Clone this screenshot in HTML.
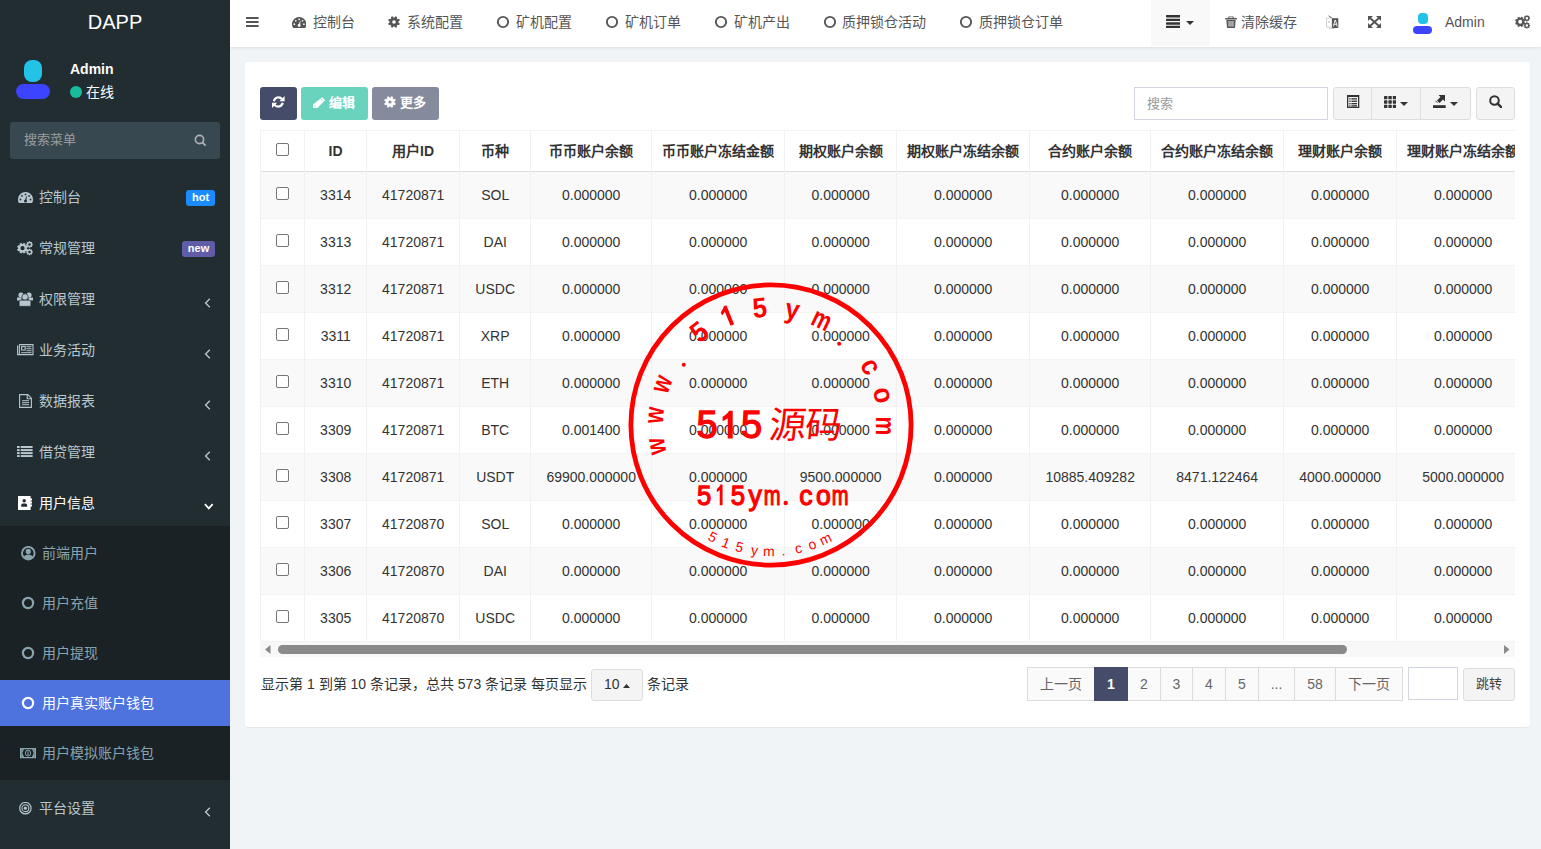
<!DOCTYPE html>
<html lang="zh-CN"><head><meta charset="utf-8">
<style>
*{box-sizing:border-box;margin:0;padding:0}
html,body{width:1541px;height:849px;overflow:hidden}
body{font-family:"Liberation Sans",sans-serif;font-size:14px;color:#333;background:#f1f4f6;position:relative}
.abs{position:absolute}
#sb{position:absolute;left:0;top:0;width:230px;height:849px;background:#222d32;color:#b8c7ce}
#logo{position:absolute;left:0;top:0;width:230px;height:45px;text-align:center;line-height:45px;font-size:20px;color:#fff}
.mi{position:absolute;left:0;width:230px;height:20px;line-height:20px;font-size:14px;color:#b8c7ce}
.mi .ic{position:absolute;left:18px;top:3px;width:15px;height:14px}
.mi .tx{position:absolute;left:39px;top:0}
.chev{position:absolute;left:204px;top:5px;width:7px;height:10px}
.badge{position:absolute;height:16px;line-height:14px;font-size:11px;font-weight:bold;color:#fff;text-align:center;border-radius:3px}
#nav{position:absolute;left:230px;top:0;width:1311px;height:47px;background:#fff;box-shadow:0 1px 3px rgba(0,0,0,.09)}
.ni{position:absolute;top:12px;height:20px;line-height:20px;font-size:14px;color:#555}
#panel{position:absolute;left:245px;top:62px;width:1285px;height:665px;background:#fff;border-radius:3px;box-shadow:0 1px 1px rgba(0,0,0,.05)}
.btn{position:absolute;border-radius:3px;color:#fff;font-size:13px;text-align:center}
table{border-collapse:collapse;table-layout:fixed;position:absolute;left:15px;top:68px}
td,th{border:1px solid #f0f0f0;text-align:center;white-space:nowrap;overflow:hidden;font-size:14px}
th{height:41px;font-weight:bold;border-bottom:2px solid #ddd;border-top:1px solid #f0f0f0}
td{height:47px}
tr.s td{background:#f9f9f9}
.cb{display:inline-block;width:13px;height:13px;border:1px solid #767676;border-radius:2px;background:#fff;vertical-align:middle}
.th{position:absolute;height:20px;line-height:20px;text-align:center;font-weight:bold;white-space:nowrap}
.td{position:absolute;height:20px;line-height:20px;text-align:center;white-space:nowrap}
.cb{position:absolute;width:13px;height:13px;border:1px solid #767676;border-radius:2px;background:#fff}
.pg{position:absolute;top:605px;height:34px;line-height:32px;border:1px solid #ddd;background:#fafafa;color:#666;text-align:center;font-size:14px}
</style></head><body>

<div id="sb">
  <div id="logo">DAPP</div>
  <!-- user panel -->
  <div class="abs" style="left:24px;top:60px;width:18px;height:22px;border-radius:8px;background:#22c3e6"></div>
  <div class="abs" style="left:16px;top:84px;width:34px;height:15px;border-radius:8px;background:#3d44ff"></div>
  <div class="abs" style="left:70px;top:60px;font-weight:bold;color:#fff;font-size:14px;line-height:18px">Admin</div>
  <div class="abs" style="left:70px;top:86px;width:12px;height:12px;border-radius:50%;background:#18bc9c"></div>
  <div class="abs" style="left:86px;top:82px;color:#fff;font-size:14px;line-height:20px">在线</div>
  <!-- search -->
  <div class="abs" style="left:10px;top:122px;width:210px;height:37px;border-radius:3px;background:#374850"></div>
  <div class="abs" style="left:24px;top:131px;font-size:13px;line-height:18px;color:#9a9c9d">搜索菜单</div>
  <svg class="abs" style="left:194px;top:133.5px" width="13" height="13" viewBox="0 0 13 13"><circle cx="5.5" cy="5.5" r="4.1" fill="none" stroke="#b0b4b6" stroke-width="1.6"/><line x1="8.4" y1="8.4" x2="11.6" y2="11.6" stroke="#b0b4b6" stroke-width="1.8"/></svg>

  <div class="mi" style="top:187px"><span class="tx">控制台</span></div>
  <div class="badge" style="left:186px;top:190px;width:29px;background:#1a8cff">hot</div>
  <div class="mi" style="top:238px"><span class="tx">常规管理</span></div>
  <div class="badge" style="left:182px;top:241px;width:33px;background:#605ca8">new</div>
  <div class="mi" style="top:289px"><span class="tx">权限管理</span></div>
  <div class="mi" style="top:340px"><span class="tx">业务活动</span></div>
  <div class="mi" style="top:391px"><span class="tx">数据报表</span></div>
  <div class="mi" style="top:442px"><span class="tx">借贷管理</span></div>
  <div class="mi" style="top:493px;color:#fff"><span class="tx">用户信息</span></div>

  <div class="abs" style="left:0;top:526px;width:230px;height:254px;background:#1a2226"></div>
  <div class="abs" style="left:0;top:680px;width:230px;height:46px;background:#4e73df"></div>
  <div class="mi" style="top:543px;color:#8aa4af"><span class="tx" style="left:42px">前端用户</span></div>
  <div class="mi" style="top:593px;color:#8aa4af"><span class="tx" style="left:42px">用户充值</span></div>
  <div class="mi" style="top:643px;color:#8aa4af"><span class="tx" style="left:42px">用户提现</span></div>
  <div class="mi" style="top:693px;color:#fff"><span class="tx" style="left:42px">用户真实账户钱包</span></div>
  <div class="mi" style="top:743px;color:#8aa4af"><span class="tx" style="left:42px">用户模拟账户钱包</span></div>
  <div class="mi" style="top:798px"><span class="tx">平台设置</span></div>
</div>

<div id="nav">
  <div class="ni" style="left:83px">控制台</div>
  <div class="ni" style="left:177px">系统配置</div>
  <div class="ni" style="left:286px">矿机配置</div>
  <div class="ni" style="left:395px">矿机订单</div>
  <div class="ni" style="left:504px">矿机产出</div>
  <div class="ni" style="left:612px">质押锁仓活动</div>
  <div class="ni" style="left:749px">质押锁仓订单</div>
  <div class="abs" style="left:921px;top:0;width:59px;height:46px;background:#f9f9f9"></div>
  <div class="ni" style="left:1011px">清除缓存</div>
  <div class="ni" style="left:1215px">Admin</div>
</div>

<div id="panel">
  <div class="btn" style="left:15px;top:25px;width:37px;height:33px;background:#444c69"></div>
  <div class="btn" style="left:56px;top:25px;width:67px;height:33px;background:#69d3be"></div><div class="abs" style="left:84px;top:31px;font-size:13px;line-height:20px;font-weight:bold;color:#fff">编辑</div>
  <div class="btn" style="left:127px;top:25px;width:67px;height:33px;background:#858b9d"></div><div class="abs" style="left:155px;top:31px;font-size:13px;line-height:20px;font-weight:bold;color:#fff">更多</div>

  <div class="abs" style="left:889px;top:25px;width:194px;height:33px;border:1px solid #d2d6de;"></div>
  <div class="abs" style="left:902px;top:33px;color:#999;font-size:13px;line-height:18px">搜索</div>
  <div class="abs" style="left:1088px;top:25px;width:138px;height:33px;border:1px solid #ddd;border-radius:3px;background:#f4f4f4"></div>
  <div class="abs" style="left:1231px;top:25px;width:39px;height:33px;border:1px solid #ddd;border-radius:3px;background:#f4f4f4"></div>
  <div class="abs" style="left:1126px;top:25px;width:1px;height:33px;background:#ddd"></div><div class="abs" style="left:1175px;top:25px;width:1px;height:33px;background:#ddd"></div>

  <!--TABLE-->
<div class="abs" style="left:15px;top:68px;width:1255px;height:527px;overflow:hidden">
<div class="abs" style="left:0;top:41px;width:1300px;height:47px;background:#f9f9f9"></div>
<div class="abs" style="left:0;top:135px;width:1300px;height:47px;background:#f9f9f9"></div>
<div class="abs" style="left:0;top:229px;width:1300px;height:47px;background:#f9f9f9"></div>
<div class="abs" style="left:0;top:323px;width:1300px;height:47px;background:#f9f9f9"></div>
<div class="abs" style="left:0;top:417px;width:1300px;height:47px;background:#f9f9f9"></div>
<div class="abs" style="left:0;top:0;width:1300px;height:1px;background:#f3f3f3"></div>
<div class="abs" style="left:0;top:41px;width:1300px;height:1px;background:#ddd"></div>
<div class="abs" style="left:0;top:88px;width:1300px;height:1px;background:#f3f3f3"></div>
<div class="abs" style="left:0;top:135px;width:1300px;height:1px;background:#f3f3f3"></div>
<div class="abs" style="left:0;top:182px;width:1300px;height:1px;background:#f3f3f3"></div>
<div class="abs" style="left:0;top:229px;width:1300px;height:1px;background:#f3f3f3"></div>
<div class="abs" style="left:0;top:276px;width:1300px;height:1px;background:#f3f3f3"></div>
<div class="abs" style="left:0;top:323px;width:1300px;height:1px;background:#f3f3f3"></div>
<div class="abs" style="left:0;top:370px;width:1300px;height:1px;background:#f3f3f3"></div>
<div class="abs" style="left:0;top:417px;width:1300px;height:1px;background:#f3f3f3"></div>
<div class="abs" style="left:0;top:464px;width:1300px;height:1px;background:#f3f3f3"></div>
<div class="abs" style="left:0;top:511px;width:1300px;height:1px;background:#f3f3f3"></div>
<div class="abs" style="left:0px;top:0;width:1px;height:511px;background:#f1f1f1"></div>
<div class="abs" style="left:44px;top:0;width:1px;height:511px;background:#f1f1f1"></div>
<div class="abs" style="left:106px;top:0;width:1px;height:511px;background:#f1f1f1"></div>
<div class="abs" style="left:199px;top:0;width:1px;height:511px;background:#f1f1f1"></div>
<div class="abs" style="left:270px;top:0;width:1px;height:511px;background:#f1f1f1"></div>
<div class="abs" style="left:391px;top:0;width:1px;height:511px;background:#f1f1f1"></div>
<div class="abs" style="left:524px;top:0;width:1px;height:511px;background:#f1f1f1"></div>
<div class="abs" style="left:636px;top:0;width:1px;height:511px;background:#f1f1f1"></div>
<div class="abs" style="left:769px;top:0;width:1px;height:511px;background:#f1f1f1"></div>
<div class="abs" style="left:890px;top:0;width:1px;height:511px;background:#f1f1f1"></div>
<div class="abs" style="left:1023px;top:0;width:1px;height:511px;background:#f1f1f1"></div>
<div class="abs" style="left:1136px;top:0;width:1px;height:511px;background:#f1f1f1"></div>
<div class="abs" style="left:1269px;top:0;width:1px;height:511px;background:#f1f1f1"></div>
<div class="cb" style="left:16px;top:13px"></div>
<div class="th" style="left:44.5px;width:62px;top:11px">ID</div>
<div class="th" style="left:106.5px;width:93px;top:11px">用户ID</div>
<div class="th" style="left:199.5px;width:71px;top:11px">币种</div>
<div class="th" style="left:270.5px;width:121px;top:11px">币币账户余额</div>
<div class="th" style="left:391.5px;width:133px;top:11px">币币账户冻结金额</div>
<div class="th" style="left:524.5px;width:112px;top:11px">期权账户余额</div>
<div class="th" style="left:636.5px;width:133px;top:11px">期权账户冻结余额</div>
<div class="th" style="left:769.5px;width:121px;top:11px">合约账户余额</div>
<div class="th" style="left:890.5px;width:133px;top:11px">合约账户冻结余额</div>
<div class="th" style="left:1023.5px;width:113px;top:11px">理财账户余额</div>
<div class="th" style="left:1136.5px;width:133px;top:11px">理财账户冻结余额</div>
<div class="cb" style="left:16px;top:57px"></div>
<div class="td" style="left:44.7px;width:62px;top:55px">3314</div>
<div class="td" style="left:106.7px;width:93px;top:55px">41720871</div>
<div class="td" style="left:199.7px;width:71px;top:55px">SOL</div>
<div class="td" style="left:270.7px;width:121px;top:55px">0.000000</div>
<div class="td" style="left:391.7px;width:133px;top:55px">0.000000</div>
<div class="td" style="left:524.7px;width:112px;top:55px">0.000000</div>
<div class="td" style="left:636.7px;width:133px;top:55px">0.000000</div>
<div class="td" style="left:769.7px;width:121px;top:55px">0.000000</div>
<div class="td" style="left:890.7px;width:133px;top:55px">0.000000</div>
<div class="td" style="left:1023.7px;width:113px;top:55px">0.000000</div>
<div class="td" style="left:1136.7px;width:133px;top:55px">0.000000</div>
<div class="cb" style="left:16px;top:104px"></div>
<div class="td" style="left:44.7px;width:62px;top:102px">3313</div>
<div class="td" style="left:106.7px;width:93px;top:102px">41720871</div>
<div class="td" style="left:199.7px;width:71px;top:102px">DAI</div>
<div class="td" style="left:270.7px;width:121px;top:102px">0.000000</div>
<div class="td" style="left:391.7px;width:133px;top:102px">0.000000</div>
<div class="td" style="left:524.7px;width:112px;top:102px">0.000000</div>
<div class="td" style="left:636.7px;width:133px;top:102px">0.000000</div>
<div class="td" style="left:769.7px;width:121px;top:102px">0.000000</div>
<div class="td" style="left:890.7px;width:133px;top:102px">0.000000</div>
<div class="td" style="left:1023.7px;width:113px;top:102px">0.000000</div>
<div class="td" style="left:1136.7px;width:133px;top:102px">0.000000</div>
<div class="cb" style="left:16px;top:151px"></div>
<div class="td" style="left:44.7px;width:62px;top:149px">3312</div>
<div class="td" style="left:106.7px;width:93px;top:149px">41720871</div>
<div class="td" style="left:199.7px;width:71px;top:149px">USDC</div>
<div class="td" style="left:270.7px;width:121px;top:149px">0.000000</div>
<div class="td" style="left:391.7px;width:133px;top:149px">0.000000</div>
<div class="td" style="left:524.7px;width:112px;top:149px">0.000000</div>
<div class="td" style="left:636.7px;width:133px;top:149px">0.000000</div>
<div class="td" style="left:769.7px;width:121px;top:149px">0.000000</div>
<div class="td" style="left:890.7px;width:133px;top:149px">0.000000</div>
<div class="td" style="left:1023.7px;width:113px;top:149px">0.000000</div>
<div class="td" style="left:1136.7px;width:133px;top:149px">0.000000</div>
<div class="cb" style="left:16px;top:198px"></div>
<div class="td" style="left:44.7px;width:62px;top:196px">3311</div>
<div class="td" style="left:106.7px;width:93px;top:196px">41720871</div>
<div class="td" style="left:199.7px;width:71px;top:196px">XRP</div>
<div class="td" style="left:270.7px;width:121px;top:196px">0.000000</div>
<div class="td" style="left:391.7px;width:133px;top:196px">0.000000</div>
<div class="td" style="left:524.7px;width:112px;top:196px">0.000000</div>
<div class="td" style="left:636.7px;width:133px;top:196px">0.000000</div>
<div class="td" style="left:769.7px;width:121px;top:196px">0.000000</div>
<div class="td" style="left:890.7px;width:133px;top:196px">0.000000</div>
<div class="td" style="left:1023.7px;width:113px;top:196px">0.000000</div>
<div class="td" style="left:1136.7px;width:133px;top:196px">0.000000</div>
<div class="cb" style="left:16px;top:245px"></div>
<div class="td" style="left:44.7px;width:62px;top:243px">3310</div>
<div class="td" style="left:106.7px;width:93px;top:243px">41720871</div>
<div class="td" style="left:199.7px;width:71px;top:243px">ETH</div>
<div class="td" style="left:270.7px;width:121px;top:243px">0.000000</div>
<div class="td" style="left:391.7px;width:133px;top:243px">0.000000</div>
<div class="td" style="left:524.7px;width:112px;top:243px">0.000000</div>
<div class="td" style="left:636.7px;width:133px;top:243px">0.000000</div>
<div class="td" style="left:769.7px;width:121px;top:243px">0.000000</div>
<div class="td" style="left:890.7px;width:133px;top:243px">0.000000</div>
<div class="td" style="left:1023.7px;width:113px;top:243px">0.000000</div>
<div class="td" style="left:1136.7px;width:133px;top:243px">0.000000</div>
<div class="cb" style="left:16px;top:292px"></div>
<div class="td" style="left:44.7px;width:62px;top:290px">3309</div>
<div class="td" style="left:106.7px;width:93px;top:290px">41720871</div>
<div class="td" style="left:199.7px;width:71px;top:290px">BTC</div>
<div class="td" style="left:270.7px;width:121px;top:290px">0.001400</div>
<div class="td" style="left:391.7px;width:133px;top:290px">0.000000</div>
<div class="td" style="left:524.7px;width:112px;top:290px">0.000000</div>
<div class="td" style="left:636.7px;width:133px;top:290px">0.000000</div>
<div class="td" style="left:769.7px;width:121px;top:290px">0.000000</div>
<div class="td" style="left:890.7px;width:133px;top:290px">0.000000</div>
<div class="td" style="left:1023.7px;width:113px;top:290px">0.000000</div>
<div class="td" style="left:1136.7px;width:133px;top:290px">0.000000</div>
<div class="cb" style="left:16px;top:339px"></div>
<div class="td" style="left:44.7px;width:62px;top:337px">3308</div>
<div class="td" style="left:106.7px;width:93px;top:337px">41720871</div>
<div class="td" style="left:199.7px;width:71px;top:337px">USDT</div>
<div class="td" style="left:270.7px;width:121px;top:337px">69900.000000</div>
<div class="td" style="left:391.7px;width:133px;top:337px">0.000000</div>
<div class="td" style="left:524.7px;width:112px;top:337px">9500.000000</div>
<div class="td" style="left:636.7px;width:133px;top:337px">0.000000</div>
<div class="td" style="left:769.7px;width:121px;top:337px">10885.409282</div>
<div class="td" style="left:890.7px;width:133px;top:337px">8471.122464</div>
<div class="td" style="left:1023.7px;width:113px;top:337px">4000.000000</div>
<div class="td" style="left:1136.7px;width:133px;top:337px">5000.000000</div>
<div class="cb" style="left:16px;top:386px"></div>
<div class="td" style="left:44.7px;width:62px;top:384px">3307</div>
<div class="td" style="left:106.7px;width:93px;top:384px">41720870</div>
<div class="td" style="left:199.7px;width:71px;top:384px">SOL</div>
<div class="td" style="left:270.7px;width:121px;top:384px">0.000000</div>
<div class="td" style="left:391.7px;width:133px;top:384px">0.000000</div>
<div class="td" style="left:524.7px;width:112px;top:384px">0.000000</div>
<div class="td" style="left:636.7px;width:133px;top:384px">0.000000</div>
<div class="td" style="left:769.7px;width:121px;top:384px">0.000000</div>
<div class="td" style="left:890.7px;width:133px;top:384px">0.000000</div>
<div class="td" style="left:1023.7px;width:113px;top:384px">0.000000</div>
<div class="td" style="left:1136.7px;width:133px;top:384px">0.000000</div>
<div class="cb" style="left:16px;top:433px"></div>
<div class="td" style="left:44.7px;width:62px;top:431px">3306</div>
<div class="td" style="left:106.7px;width:93px;top:431px">41720870</div>
<div class="td" style="left:199.7px;width:71px;top:431px">DAI</div>
<div class="td" style="left:270.7px;width:121px;top:431px">0.000000</div>
<div class="td" style="left:391.7px;width:133px;top:431px">0.000000</div>
<div class="td" style="left:524.7px;width:112px;top:431px">0.000000</div>
<div class="td" style="left:636.7px;width:133px;top:431px">0.000000</div>
<div class="td" style="left:769.7px;width:121px;top:431px">0.000000</div>
<div class="td" style="left:890.7px;width:133px;top:431px">0.000000</div>
<div class="td" style="left:1023.7px;width:113px;top:431px">0.000000</div>
<div class="td" style="left:1136.7px;width:133px;top:431px">0.000000</div>
<div class="cb" style="left:16px;top:480px"></div>
<div class="td" style="left:44.7px;width:62px;top:478px">3305</div>
<div class="td" style="left:106.7px;width:93px;top:478px">41720870</div>
<div class="td" style="left:199.7px;width:71px;top:478px">USDC</div>
<div class="td" style="left:270.7px;width:121px;top:478px">0.000000</div>
<div class="td" style="left:391.7px;width:133px;top:478px">0.000000</div>
<div class="td" style="left:524.7px;width:112px;top:478px">0.000000</div>
<div class="td" style="left:636.7px;width:133px;top:478px">0.000000</div>
<div class="td" style="left:769.7px;width:121px;top:478px">0.000000</div>
<div class="td" style="left:890.7px;width:133px;top:478px">0.000000</div>
<div class="td" style="left:1023.7px;width:113px;top:478px">0.000000</div>
<div class="td" style="left:1136.7px;width:133px;top:478px">0.000000</div>
<div class="abs" style="left:0;top:512px;width:1300px;height:16px;background:#f8f8f8"></div>
</div>
<!--/TABLE-->

  <div class="abs" style="left:16px;top:612px;font-size:14px;line-height:20px;color:#333">显示第 1 到第 10 条记录，总共 573 条记录 每页显示</div>
  <div class="abs" style="left:346px;top:607px;width:52px;height:32px;border:1px solid #ddd;border-radius:3px;background:#f4f4f4"></div>
  <div class="abs" style="left:359px;top:612px;font-size:14px;line-height:20px;color:#333">10</div>
  <div class="abs" style="left:402px;top:612px;font-size:14px;line-height:20px">条记录</div>
<div class="pg" style="left:782px;width:68px">上一页</div>
<div class="pg" style="left:849px;width:34px;background:#444c69;border-color:#444c69;color:#fff;font-weight:bold;z-index:2">1</div>
<div class="pg" style="left:882px;width:34px">2</div>
<div class="pg" style="left:915px;width:33px">3</div>
<div class="pg" style="left:947px;width:34px">4</div>
<div class="pg" style="left:980px;width:34px">5</div>
<div class="pg" style="left:1013px;width:37px">...</div>
<div class="pg" style="left:1049px;width:42px">58</div>
<div class="pg" style="left:1090px;width:68px">下一页</div>
<div class="abs" style="left:1163px;top:605px;width:50px;height:33px;border:1px solid #d2d6de;background:#fff"></div>
<div class="abs" style="left:1218px;top:606px;width:52px;height:33px;border:1px solid #ddd;border-radius:3px;background:#f4f4f4;text-align:center;line-height:29px;font-size:13px;color:#444">跳转</div>
</div>
<!--ICONS-->
<svg class="abs" style="left:246px;top:17px;" width="13" height="10" viewBox="0 0 13 10"><rect x="0" y="0" width="12.6" height="2" fill="#555"/><rect x="0" y="4" width="12.6" height="2" fill="#555"/><rect x="0" y="8" width="12.6" height="2" fill="#555"/></svg>
<svg class="abs" style="left:292px;top:17px;" width="14.3" height="11" viewBox="0 0 14.3 11"><path d="M1.13,11 A7.15,7.15 0 1,1 13.17,11 Z" fill="#555"/><circle cx="2.36" cy="7.15" r="0.86" fill="#fff"/><circle cx="3.76" cy="3.76" r="0.86" fill="#fff"/><circle cx="7.15" cy="2.36" r="0.86" fill="#fff"/><circle cx="10.54" cy="3.76" r="0.86" fill="#fff"/><circle cx="11.94" cy="7.15" r="0.86" fill="#fff"/><circle cx="7.15" cy="8.50" r="1.43" fill="#fff"/><path d="M6.45,8.50 L8.05,3.93 L8.55,4.15 L7.95,8.70Z" fill="#fff"/></svg>
<svg class="abs" style="left:388px;top:16px;" width="12" height="12" viewBox="0 0 12 12"><path fill-rule="evenodd" d="M10.55,6.70 L11.84,7.38 L11.10,9.16 L9.71,8.72 L8.72,9.71 L9.16,11.10 L7.38,11.84 L6.70,10.55 L5.30,10.55 L4.62,11.84 L2.84,11.10 L3.28,9.71 L2.29,8.72 L0.90,9.16 L0.16,7.38 L1.45,6.70 L1.45,5.30 L0.16,4.62 L0.90,2.84 L2.29,3.28 L3.28,2.29 L2.84,0.90 L4.62,0.16 L5.30,1.45 L6.70,1.45 L7.38,0.16 L9.16,0.90 L8.72,2.29 L9.71,3.28 L11.10,2.84 L11.84,4.62 L10.55,5.30Z M7.80,6.00 A1.80,1.80 0 1,0 4.20,6.00 A1.80,1.80 0 1,0 7.80,6.00Z" fill="#555"/></svg>
<svg class="abs" style="left:496px;top:15px;" width="14" height="14" viewBox="0 0 14 14"><circle cx="7" cy="7" r="5.15" fill="none" stroke="#555" stroke-width="1.9"/></svg>
<svg class="abs" style="left:605.2px;top:15px;" width="14" height="14" viewBox="0 0 14 14"><circle cx="7" cy="7" r="5.15" fill="none" stroke="#555" stroke-width="1.9"/></svg>
<svg class="abs" style="left:713.6px;top:15px;" width="14" height="14" viewBox="0 0 14 14"><circle cx="7" cy="7" r="5.15" fill="none" stroke="#555" stroke-width="1.9"/></svg>
<svg class="abs" style="left:823px;top:15px;" width="14" height="14" viewBox="0 0 14 14"><circle cx="7" cy="7" r="5.15" fill="none" stroke="#555" stroke-width="1.9"/></svg>
<svg class="abs" style="left:959.4px;top:15px;" width="14" height="14" viewBox="0 0 14 14"><circle cx="7" cy="7" r="5.15" fill="none" stroke="#555" stroke-width="1.9"/></svg>
<svg class="abs" style="left:1166px;top:15px;" width="14" height="13" viewBox="0 0 14 13"><rect x="0" y="0" width="14.3" height="2.4" rx="0.6" fill="#333"/><rect x="0" y="3.7" width="14.3" height="2.4" rx="0.6" fill="#333"/><rect x="0" y="7.3" width="14.3" height="2.4" rx="0.6" fill="#333"/><rect x="0" y="10.7" width="14.3" height="2.4" rx="0.6" fill="#333"/></svg>
<svg class="abs" style="left:1186px;top:21px;" width="8" height="4" viewBox="0 0 8 4"><path d="M0,0 L8,0 L4,4Z" fill="#333"/></svg>
<svg class="abs" style="left:1225px;top:16px;" width="12" height="12" viewBox="0 0 12 12"><path d="M4,0.5 h4 a0.8,0.8 0 0 1 0.8,0.8 V2 H11.8 V3.4 H0.2 V2 H3.2 V1.3 A0.8,0.8 0 0 1 4,0.5Z M1.4,4 H10.6 L10.1,11 a1,1 0 0 1 -1,1 H2.9 a1,1 0 0 1 -1,-1Z" fill="#555"/><rect x="3.6" y="5" width="0.9" height="5.6" fill="#fff"/><rect x="5.55" y="5" width="0.9" height="5.6" fill="#fff"/><rect x="7.5" y="5" width="0.9" height="5.6" fill="#fff"/><rect x="4.3" y="1.2" width="3.4" height="0.8" fill="#fff"/></svg>
<svg class="abs" style="left:1326px;top:15px;" width="13" height="14" viewBox="0 0 13 14"><path d="M0.5,3 H6 V12 H0.5Z" fill="none" stroke="#ccc" stroke-width="0.9"/><path d="M1.5,0 L5.5,2 L5.5,3.5 Z" fill="#555"/><rect x="6" y="3.2" width="6.3" height="9.8" fill="#555"/><path d="M7.3,11.5 L9.1,5 L9.4,5 L11.2,11.5 M8,9.3 H10.5" stroke="#fff" stroke-width="0.9" fill="none"/><path d="M3,13.5 H8.5" stroke="#bbb" stroke-width="0.7"/><path d="M2,6 L4,8 M4,6 L2,8" stroke="#ccc" stroke-width="0.7"/></svg>
<svg class="abs" style="left:1368px;top:16px;" width="13" height="12" viewBox="0 0 13 12"><g fill="#555"><path d="M0,0 H5 L0,5Z"/><path d="M13,0 H8 L13,5Z"/><path d="M0,12 H5 L0,7Z"/><path d="M13,12 H8 L13,7Z"/></g><g stroke="#555" stroke-width="1.9"><path d="M1.5,1.5 L11.5,10.5"/><path d="M11.5,1.5 L1.5,10.5"/></g></svg>
<div class="abs" style="left:1418px;top:12.5px;width:9.5px;height:11.5px;border-radius:4px;background:#22c3e6"></div>
<div class="abs" style="left:1413px;top:26px;width:19px;height:8px;border-radius:4px;background:#3d44ff"></div>
<svg class="abs" style="left:1514.5px;top:14.5px;" width="16" height="14" viewBox="0 0 16 14"><path fill-rule="evenodd" d="M9.28,7.30 L10.35,7.84 L9.56,9.76 L8.42,9.38 L7.77,10.04 L8.14,11.17 L6.22,11.97 L5.69,10.90 L4.76,10.90 L4.23,11.97 L2.31,11.17 L2.68,10.04 L2.03,9.38 L0.89,9.76 L0.10,7.84 L1.17,7.30 L1.17,6.38 L0.10,5.84 L0.89,3.92 L2.03,4.30 L2.68,3.64 L2.31,2.51 L4.23,1.71 L4.76,2.78 L5.69,2.78 L6.22,1.71 L8.14,2.51 L7.77,3.64 L8.42,4.30 L9.56,3.92 L10.35,5.84 L9.28,6.38Z M7.22,6.84 A1.99,1.99 0 1,0 3.23,6.84 A1.99,1.99 0 1,0 7.22,6.84Z" fill="#555"/><path fill-rule="evenodd" d="M14.24,2.60 L15.03,2.62 L15.03,4.03 L14.24,4.05 L14.06,4.48 L14.60,5.06 L13.61,6.05 L13.03,5.51 L12.60,5.69 L12.58,6.48 L11.17,6.48 L11.15,5.69 L10.72,5.51 L10.14,6.05 L9.15,5.06 L9.69,4.48 L9.51,4.05 L8.72,4.03 L8.72,2.62 L9.51,2.60 L9.69,2.17 L9.15,1.59 L10.14,0.60 L10.72,1.14 L11.15,0.96 L11.17,0.17 L12.58,0.17 L12.60,0.96 L13.03,1.14 L13.61,0.60 L14.60,1.59 L14.06,2.17Z M13.11,3.32 A1.23,1.23 0 1,0 10.64,3.32 A1.23,1.23 0 1,0 13.11,3.32Z" fill="#555"/><path fill-rule="evenodd" d="M14.24,9.72 L15.03,9.75 L15.03,11.15 L14.24,11.18 L14.06,11.61 L14.60,12.18 L13.61,13.18 L13.03,12.63 L12.60,12.81 L12.58,13.60 L11.17,13.60 L11.15,12.81 L10.72,12.63 L10.14,13.18 L9.15,12.18 L9.69,11.61 L9.51,11.18 L8.72,11.15 L8.72,9.75 L9.51,9.72 L9.69,9.29 L9.15,8.72 L10.14,7.72 L10.72,8.27 L11.15,8.09 L11.17,7.30 L12.58,7.30 L12.60,8.09 L13.03,8.27 L13.61,7.72 L14.60,8.72 L14.06,9.29Z M13.11,10.45 A1.23,1.23 0 1,0 10.64,10.45 A1.23,1.23 0 1,0 13.11,10.45Z" fill="#555"/></svg>
<svg class="abs" style="left:17.6px;top:191.5px;" width="15" height="11.5" viewBox="0 0 15 11.5"><path d="M1.16,11.5 A7.5,7.5 0 1,1 13.84,11.5 Z" fill="#b8c7ce"/><circle cx="2.47" cy="7.50" r="0.90" fill="#222d32"/><circle cx="3.95" cy="3.95" r="0.90" fill="#222d32"/><circle cx="7.50" cy="2.47" r="0.90" fill="#222d32"/><circle cx="11.05" cy="3.95" r="0.90" fill="#222d32"/><circle cx="12.53" cy="7.50" r="0.90" fill="#222d32"/><circle cx="7.50" cy="9.00" r="1.50" fill="#222d32"/><path d="M6.80,9.00 L8.40,4.12 L8.90,4.35 L8.30,9.20Z" fill="#222d32"/></svg>
<svg class="abs" style="left:17px;top:240.5px;" width="17" height="15" viewBox="0 0 17 15"><path fill-rule="evenodd" d="M9.77,7.69 L10.90,8.25 L10.06,10.27 L8.87,9.88 L8.18,10.57 L8.57,11.76 L6.55,12.60 L5.99,11.47 L5.01,11.47 L4.45,12.60 L2.43,11.76 L2.82,10.57 L2.13,9.88 L0.94,10.27 L0.10,8.25 L1.23,7.69 L1.23,6.71 L0.10,6.15 L0.94,4.13 L2.13,4.52 L2.82,3.83 L2.43,2.64 L4.45,1.80 L5.01,2.93 L5.99,2.93 L6.55,1.80 L8.57,2.64 L8.18,3.83 L8.87,4.52 L10.06,4.13 L10.90,6.15 L9.77,6.71Z M7.60,7.20 A2.10,2.10 0 1,0 3.40,7.20 A2.10,2.10 0 1,0 7.60,7.20Z" fill="#b8c7ce"/><path fill-rule="evenodd" d="M14.99,2.74 L15.82,2.76 L15.82,4.24 L14.99,4.26 L14.80,4.72 L15.37,5.32 L14.32,6.37 L13.72,5.80 L13.26,5.99 L13.24,6.82 L11.76,6.82 L11.74,5.99 L11.28,5.80 L10.68,6.37 L9.63,5.32 L10.20,4.72 L10.01,4.26 L9.18,4.24 L9.18,2.76 L10.01,2.74 L10.20,2.28 L9.63,1.68 L10.68,0.63 L11.28,1.20 L11.74,1.01 L11.76,0.18 L13.24,0.18 L13.26,1.01 L13.72,1.20 L14.32,0.63 L15.37,1.68 L14.80,2.28Z M13.80,3.50 A1.30,1.30 0 1,0 11.20,3.50 A1.30,1.30 0 1,0 13.80,3.50Z" fill="#b8c7ce"/><path fill-rule="evenodd" d="M14.99,10.24 L15.82,10.26 L15.82,11.74 L14.99,11.76 L14.80,12.22 L15.37,12.82 L14.32,13.87 L13.72,13.30 L13.26,13.49 L13.24,14.32 L11.76,14.32 L11.74,13.49 L11.28,13.30 L10.68,13.87 L9.63,12.82 L10.20,12.22 L10.01,11.76 L9.18,11.74 L9.18,10.26 L10.01,10.24 L10.20,9.78 L9.63,9.18 L10.68,8.13 L11.28,8.70 L11.74,8.51 L11.76,7.68 L13.24,7.68 L13.26,8.51 L13.72,8.70 L14.32,8.13 L15.37,9.18 L14.80,9.78Z M13.80,11.00 A1.30,1.30 0 1,0 11.20,11.00 A1.30,1.30 0 1,0 13.80,11.00Z" fill="#b8c7ce"/></svg>
<svg class="abs" style="left:17px;top:291.7px;" width="16" height="15" viewBox="0 0 16 15"><g fill="#b8c7ce"><circle cx="4" cy="3" r="2.6"/><circle cx="12" cy="3" r="2.6"/><path d="M0,5.5 H4.5 V8.5 H0Z" rx="1"/><path d="M11.5,5.5 H16 V8.5 H11.5Z"/><circle cx="8" cy="5" r="3.2" stroke="#222d32" stroke-width="0.7"/><path d="M2.2,9.3 a1.5,1.5 0 0 1 1.5,-1.1 H12.3 a1.5,1.5 0 0 1 1.5,1.1 V14.3 H2.2Z" stroke="#222d32" stroke-width="0.6"/></g></svg>
<svg class="abs" style="left:17px;top:344px;" width="17" height="12" viewBox="0 0 17 12"><g fill="none" stroke="#b8c7ce" stroke-width="1.1"><path d="M2.4,0.6 H16 V10.6 H0.6 V1.6"/><path d="M2.4,0.6 V10.6"/><rect x="4.6" y="2.6" width="3.6" height="3.4"/></g><g fill="#b8c7ce"><rect x="9.5" y="2.2" width="5" height="1"/><rect x="9.5" y="4.2" width="5" height="1"/><rect x="9.5" y="6.2" width="5" height="1"/><rect x="4.2" y="8.2" width="10.3" height="1"/></g></svg>
<svg class="abs" style="left:18.5px;top:394px;" width="13" height="14" viewBox="0 0 13 14"><g fill="none" stroke="#b8c7ce" stroke-width="1.1"><path d="M0.6,0.6 H8.8 L12.4,4.2 V13.4 H0.6Z"/><path d="M8.2,0.6 V4.8 H12.4"/></g><g fill="#b8c7ce"><rect x="3" y="6.2" width="7" height="1"/><rect x="3" y="8.2" width="7" height="1"/><rect x="3" y="10.2" width="7" height="1"/></g></svg>
<svg class="abs" style="left:17.3px;top:446px;" width="16" height="11" viewBox="0 0 16 11"><rect x="0" y="0" width="2.7" height="2" fill="#b8c7ce"/><rect x="3.7" y="0" width="11.9" height="2" fill="#b8c7ce"/><rect x="0" y="3.1" width="2.7" height="2" fill="#b8c7ce"/><rect x="3.7" y="3.1" width="11.9" height="2" fill="#b8c7ce"/><rect x="0" y="6.1" width="2.7" height="2" fill="#b8c7ce"/><rect x="3.7" y="6.1" width="11.9" height="2" fill="#b8c7ce"/><rect x="0" y="9.1" width="2.7" height="2" fill="#b8c7ce"/><rect x="3.7" y="9.1" width="11.9" height="2" fill="#b8c7ce"/></svg>
<svg class="abs" style="left:18px;top:496px;" width="14" height="14" viewBox="0 0 14 14"><path d="M0,0 H12.6 V2.6 H14 V4.6 H12.6 V5.6 H14 V7.6 H12.6 V8.6 H14 V10.6 H12.6 V14 H0Z" fill="#fff"/><circle cx="6.2" cy="4.8" r="1.7" fill="#222d32"/><path d="M3.2,10.8 V9.2 a1.6,1.6 0 0 1 1.6,-1.6 H7.6 a1.6,1.6 0 0 1 1.6,1.6 V10.8Z" fill="#222d32"/></svg>
<svg class="abs" style="left:204px;top:298.4px;" width="8" height="10" viewBox="0 0 8 10"><path d="M5.8,0.8 L1.6,5 L5.8,9.2" fill="none" stroke="#b8c7ce" stroke-width="1.35"/></svg>
<svg class="abs" style="left:204px;top:349.4px;" width="8" height="10" viewBox="0 0 8 10"><path d="M5.8,0.8 L1.6,5 L5.8,9.2" fill="none" stroke="#b8c7ce" stroke-width="1.35"/></svg>
<svg class="abs" style="left:204px;top:400.4px;" width="8" height="10" viewBox="0 0 8 10"><path d="M5.8,0.8 L1.6,5 L5.8,9.2" fill="none" stroke="#b8c7ce" stroke-width="1.35"/></svg>
<svg class="abs" style="left:204px;top:451.4px;" width="8" height="10" viewBox="0 0 8 10"><path d="M5.8,0.8 L1.6,5 L5.8,9.2" fill="none" stroke="#b8c7ce" stroke-width="1.35"/></svg>
<svg class="abs" style="left:204px;top:807.4px;" width="8" height="10" viewBox="0 0 8 10"><path d="M5.8,0.8 L1.6,5 L5.8,9.2" fill="none" stroke="#b8c7ce" stroke-width="1.35"/></svg>
<svg class="abs" style="left:204px;top:503px;" width="10" height="8" viewBox="0 0 10 8"><path d="M0.9,1.2 L4.8,5.4 L8.7,1.2" fill="none" stroke="#fff" stroke-width="1.7"/></svg>
<svg class="abs" style="left:20.7px;top:545.7px;" width="15" height="15" viewBox="0 0 15 15"><circle cx="7.3" cy="7.2" r="6.3" fill="none" stroke="#8aa4af" stroke-width="1.9"/><circle cx="7.3" cy="5.4" r="2.6" fill="#8aa4af"/><path d="M2.6,11.5 C3.5,9.3 5,8.6 7.3,8.6 C9.6,8.6 11.1,9.3 12,11.5 C10.8,12.6 9.2,13.3 7.3,13.3 C5.4,13.3 3.8,12.6 2.6,11.5Z" fill="#8aa4af"/></svg>
<svg class="abs" style="left:20.9px;top:596px;" width="14" height="14" viewBox="0 0 14 14"><circle cx="7" cy="7" r="5.1" fill="none" stroke="#8aa4af" stroke-width="2.2"/></svg>
<svg class="abs" style="left:20.9px;top:646px;" width="14" height="14" viewBox="0 0 14 14"><circle cx="7" cy="7" r="5.1" fill="none" stroke="#8aa4af" stroke-width="2.2"/></svg>
<svg class="abs" style="left:20.9px;top:696px;" width="14" height="14" viewBox="0 0 14 14"><circle cx="7" cy="7" r="5.1" fill="none" stroke="#fff" stroke-width="2.2"/></svg>
<svg class="abs" style="left:20px;top:748px;" width="16" height="11" viewBox="0 0 16 11"><path fill-rule="evenodd" fill="#8aa4af" d="M0,0 H16 V10.2 H0Z M1.3,1.3 V8.9 H14.7 V1.3Z"/><path fill="#8aa4af" d="M1.3,1.3 H4 L2.3,5.1 L4,8.9 H1.3Z M14.7,1.3 H12 L13.7,5.1 L12,8.9 H14.7Z"/><ellipse cx="8" cy="5.1" rx="2.6" ry="3" fill="none" stroke="#8aa4af" stroke-width="1"/><rect x="7.5" y="3.4" width="1" height="3.6" fill="#8aa4af"/></svg>
<svg class="abs" style="left:18.6px;top:802px;" width="13" height="13" viewBox="0 0 13 13"><circle cx="6.4" cy="6.2" r="5.7" fill="none" stroke="#b8c7ce" stroke-width="1.2"/><circle cx="6.4" cy="6.2" r="3.4" fill="none" stroke="#b8c7ce" stroke-width="1.1"/><circle cx="6.4" cy="6.2" r="1.6" fill="#b8c7ce"/></svg>
<svg class="abs" style="left:272.4px;top:96.2px;" width="13" height="12" viewBox="0 0 13 12"><g fill="none" stroke="#fff" stroke-width="2.1"><path d="M1.9,5.2 A4.6,4.6 0 0 1 10.2,3.4"/><path d="M10.7,6.8 A4.6,4.6 0 0 1 2.4,8.6"/></g><path d="M12.6,0 V5.2 H7.4Z" fill="#fff"/><path d="M0,12 V6.8 H5.2Z" fill="#fff"/></svg>
<svg class="abs" style="left:313.4px;top:96.8px;" width="12.5" height="11.5" viewBox="0 0 12.5 11.5"><path d="M9.2,0.3 L12.2,3.3 L3.9,11.4 L0,11.4 L0,7.5 Z" fill="#fff"/><path d="M1.2,8.4 L3,10.2" stroke="#69d3be" stroke-width="0.6"/><path d="M7.9,1.9 L10.6,4.6" stroke="#69d3be" stroke-width="0.6"/></svg>
<svg class="abs" style="left:384.2px;top:96.4px;" width="12" height="12" viewBox="0 0 12 12"><path fill-rule="evenodd" d="M10.55,6.70 L11.84,7.38 L11.10,9.16 L9.71,8.72 L8.72,9.71 L9.16,11.10 L7.38,11.84 L6.70,10.55 L5.30,10.55 L4.62,11.84 L2.84,11.10 L3.28,9.71 L2.29,8.72 L0.90,9.16 L0.16,7.38 L1.45,6.70 L1.45,5.30 L0.16,4.62 L0.90,2.84 L2.29,3.28 L3.28,2.29 L2.84,0.90 L4.62,0.16 L5.30,1.45 L6.70,1.45 L7.38,0.16 L9.16,0.90 L8.72,2.29 L9.71,3.28 L11.10,2.84 L11.84,4.62 L10.55,5.30Z M7.60,6.00 A1.60,1.60 0 1,0 4.40,6.00 A1.60,1.60 0 1,0 7.60,6.00Z" fill="#fff"/></svg>
<svg class="abs" style="left:1346.7px;top:95px;" width="13" height="13" viewBox="0 0 13 13"><path fill-rule="evenodd" fill="#333" d="M0,0 H12.3 V13 H0Z M1.3,2 V11.7 H11 V2Z"/><rect x="2.3" y="3.2" width="1.3" height="1.3" fill="#333"/><rect x="4.4" y="3.2" width="5.6" height="1.3" fill="#333"/><rect x="2.3" y="5.6" width="1.3" height="1.3" fill="#333"/><rect x="4.4" y="5.6" width="5.6" height="1.3" fill="#333"/><rect x="2.3" y="8" width="1.3" height="1.3" fill="#333"/><rect x="4.4" y="8" width="5.6" height="1.3" fill="#333"/><rect x="2.3" y="10.2" width="1.3" height="1.3" fill="#333"/><rect x="4.4" y="10.2" width="5.6" height="1.3" fill="#333"/></svg>
<svg class="abs" style="left:1383.8px;top:96px;" width="12.3" height="12" viewBox="0 0 12.3 12"><rect x="0" y="0" width="3.4" height="3.3" rx="0.4" fill="#333"/><rect x="0" y="4.35" width="3.4" height="3.3" rx="0.4" fill="#333"/><rect x="0" y="8.7" width="3.4" height="3.3" rx="0.4" fill="#333"/><rect x="4.4" y="0" width="3.4" height="3.3" rx="0.4" fill="#333"/><rect x="4.4" y="4.35" width="3.4" height="3.3" rx="0.4" fill="#333"/><rect x="4.4" y="8.7" width="3.4" height="3.3" rx="0.4" fill="#333"/><rect x="8.8" y="0" width="3.4" height="3.3" rx="0.4" fill="#333"/><rect x="8.8" y="4.35" width="3.4" height="3.3" rx="0.4" fill="#333"/><rect x="8.8" y="8.7" width="3.4" height="3.3" rx="0.4" fill="#333"/></svg>
<svg class="abs" style="left:1400.2px;top:102px;" width="8" height="4" viewBox="0 0 8 4"><path d="M0,0 L8,0 L4,4Z" fill="#333"/></svg>
<svg class="abs" style="left:1433px;top:95px;" width="13" height="13" viewBox="0 0 13 13"><rect x="0" y="10.2" width="12.7" height="2.8" fill="#333"/><path d="M5.5,0 H12 V6.5 L10,4.5 L6.5,8 L4,5.5 L7.5,2Z" fill="#333"/><path d="M2.5,5.8 L4.4,7.7" stroke="#333" stroke-width="1"/></svg>
<svg class="abs" style="left:1450px;top:102px;" width="8" height="4" viewBox="0 0 8 4"><path d="M0,0 L8,0 L4,4Z" fill="#333"/></svg>
<svg class="abs" style="left:1489px;top:95px;" width="13.3" height="13" viewBox="0 0 13.3 13"><circle cx="5.5" cy="5.5" r="4.3" fill="none" stroke="#333" stroke-width="2"/><path d="M8.6,8.6 L12.3,12.3" stroke="#333" stroke-width="2.4" stroke-linecap="round"/></svg>
<svg class="abs" style="left:623px;top:684px;" width="7" height="4" viewBox="0 0 7 4"><path d="M0,4 L7,4 L3.5,0Z" fill="#333"/></svg>
<div class="abs" style="left:278px;top:645px;width:1069px;height:9px;border-radius:4.5px;background:#8a8a8a"></div>
<svg class="abs" style="left:265px;top:645px;" width="6" height="9" viewBox="0 0 6 9"><path d="M5.5,0 V9 L0,4.5Z" fill="#8a8a8a"/></svg>
<svg class="abs" style="left:1504px;top:645px;" width="6" height="9" viewBox="0 0 6 9"><path d="M0,0 V9 L5.5,4.5Z" fill="#8a8a8a"/></svg>
<!--/ICONS-->
<!--STAMP-->
<svg class="abs" style="left:620.5px;top:274.5px;font-family:'Liberation Sans',sans-serif" width="300" height="300" viewBox="0 0 300 300"><circle cx="150" cy="150" r="140.1" fill="none" stroke="#f00" stroke-width="4.8"/><text x="0" y="0" transform="translate(34.47,171.41) rotate(259.50) scale(0.75,1)" text-anchor="middle" dominant-baseline="central" font-size="28" font-weight="bold" fill="#f00">w</text><text x="0" y="0" transform="translate(32.91,140.17) rotate(274.80) scale(0.75,1)" text-anchor="middle" dominant-baseline="central" font-size="28" font-weight="bold" fill="#f00">w</text><text x="0" y="0" transform="translate(40.01,108.66) rotate(290.60) scale(0.75,1)" text-anchor="middle" dominant-baseline="central" font-size="28" font-weight="bold" fill="#f00">w</text><circle cx="62.75" cy="89.81" r="2" fill="#f00"/><text x="0" y="0" transform="translate(78.15,57.03) rotate(322.30) scale(0.92,1)" text-anchor="middle" dominant-baseline="central" font-size="28" font-weight="bold" fill="#f00">5</text><path d="M0.185,1 V0.27 C0.125,0.32 0.06,0.35 0,0.38 V0.215 C0.1,0.16 0.19,0.08 0.235,0 H0.366 V1 Z" fill="#f00" transform="translate(105.60,41.21) rotate(337.80) scale(1.050,1) scale(20.50) translate(-0.183,-0.5)"/><text x="0" y="0" transform="translate(138.74,33.04) rotate(354.50) scale(0.92,1)" text-anchor="middle" dominant-baseline="central" font-size="28" font-weight="bold" fill="#f00">5</text><text x="0" y="0" transform="translate(171.41,34.47) rotate(370.50) scale(0.92,1)" text-anchor="middle" dominant-baseline="central" font-size="28" font-weight="bold" fill="#f00">y</text><text x="0" y="0" transform="translate(201.14,44.21) rotate(385.80) scale(0.75,1)" text-anchor="middle" dominant-baseline="central" font-size="28" font-weight="bold" fill="#f00">m</text><circle cx="218.14" cy="68.80" r="2" fill="#f00"/><text x="0" y="0" transform="translate(249.95,91.13) rotate(419.50) scale(0.92,1)" text-anchor="middle" dominant-baseline="central" font-size="28" font-weight="bold" fill="#f00">c</text><text x="0" y="0" transform="translate(262.53,119.85) rotate(435.00) scale(0.92,1)" text-anchor="middle" dominant-baseline="central" font-size="28" font-weight="bold" fill="#f00">o</text><text x="0" y="0" transform="translate(264.50,151.00) rotate(450.50) scale(0.75,1)" text-anchor="middle" dominant-baseline="central" font-size="28" font-weight="bold" fill="#f00">m</text><text x="0" y="0" transform="translate(91.82,261.76) rotate(27.50)" text-anchor="middle" dominant-baseline="central" font-size="14" fill="#f00">5</text><text x="0" y="0" transform="translate(104.85,267.63) rotate(21.00)" text-anchor="middle" dominant-baseline="central" font-size="14" fill="#f00">1</text><text x="0" y="0" transform="translate(118.45,271.99) rotate(14.50)" text-anchor="middle" dominant-baseline="central" font-size="14" fill="#f00">5</text><text x="0" y="0" transform="translate(133.55,274.92) rotate(7.50)" text-anchor="middle" dominant-baseline="central" font-size="14" fill="#f00">y</text><text x="0" y="0" transform="translate(147.80,275.98) rotate(1.00)" text-anchor="middle" dominant-baseline="central" font-size="14" fill="#f00">m</text><text x="0" y="0" transform="translate(162.08,275.42) rotate(-5.50)" text-anchor="middle" dominant-baseline="central" font-size="14" fill="#f00">.</text><text x="0" y="0" transform="translate(177.27,273.01) rotate(-12.50)" text-anchor="middle" dominant-baseline="central" font-size="14" fill="#f00">c</text><text x="0" y="0" transform="translate(191.02,269.14) rotate(-19.00)" text-anchor="middle" dominant-baseline="central" font-size="14" fill="#f00">o</text><text x="0" y="0" transform="translate(204.24,263.73) rotate(-25.50)" text-anchor="middle" dominant-baseline="central" font-size="14" fill="#f00">m</text><path d="M0.185,1 V0.27 C0.125,0.32 0.06,0.35 0,0.38 V0.215 C0.1,0.16 0.19,0.08 0.235,0 H0.366 V1 Z" fill="#f00" transform="translate(106.65,149.60) rotate(0.00) scale(1.000,1) scale(27.60) translate(-0.183,-0.5)"/><text x="86.0" y="163.4" text-anchor="middle" font-size="38" fill="#f00" stroke="#f00" stroke-width="1.3">5</text><text x="130.5" y="163.4" text-anchor="middle" font-size="38" fill="#f00" stroke="#f00" stroke-width="1.3">5</text><text transform="translate(146.5,162.5) skewX(-6)" font-size="37" fill="#f00" font-family="Liberation Serif, serif">源码</text><text transform="translate(83.1,230.2) scale(0.92,1)" text-anchor="middle" font-size="28" fill="#f00" stroke="#f00" stroke-width="1.25">5</text><path d="M0.185,1 V0.27 C0.125,0.32 0.06,0.35 0,0.38 V0.215 C0.1,0.16 0.19,0.08 0.235,0 H0.366 V1 Z" fill="#f00" transform="translate(98.70,219.85) rotate(0.00) scale(0.750,1) scale(20.70) translate(-0.183,-0.5)"/><text transform="translate(116.9,230.2) scale(0.92,1)" text-anchor="middle" font-size="28" fill="#f00" stroke="#f00" stroke-width="1.25">5</text><text transform="translate(134.2,230.2) scale(0.95,1)" text-anchor="middle" font-size="28" fill="#f00" stroke="#f00" stroke-width="1.25">y</text><text transform="translate(151.1,230.2) scale(0.72,1)" text-anchor="middle" font-size="28" fill="#f00" stroke="#f00" stroke-width="1.25">m</text><circle cx="164.7" cy="228.0" r="2.2" fill="#f00"/><text transform="translate(185.0,230.2) scale(0.95,1)" text-anchor="middle" font-size="28" fill="#f00" stroke="#f00" stroke-width="1.25">c</text><text transform="translate(202.5,230.2) scale(0.95,1)" text-anchor="middle" font-size="28" fill="#f00" stroke="#f00" stroke-width="1.25">o</text><text transform="translate(219.2,230.2) scale(0.72,1)" text-anchor="middle" font-size="28" fill="#f00" stroke="#f00" stroke-width="1.25">m</text></svg>
<!--/STAMP-->
</body></html>
